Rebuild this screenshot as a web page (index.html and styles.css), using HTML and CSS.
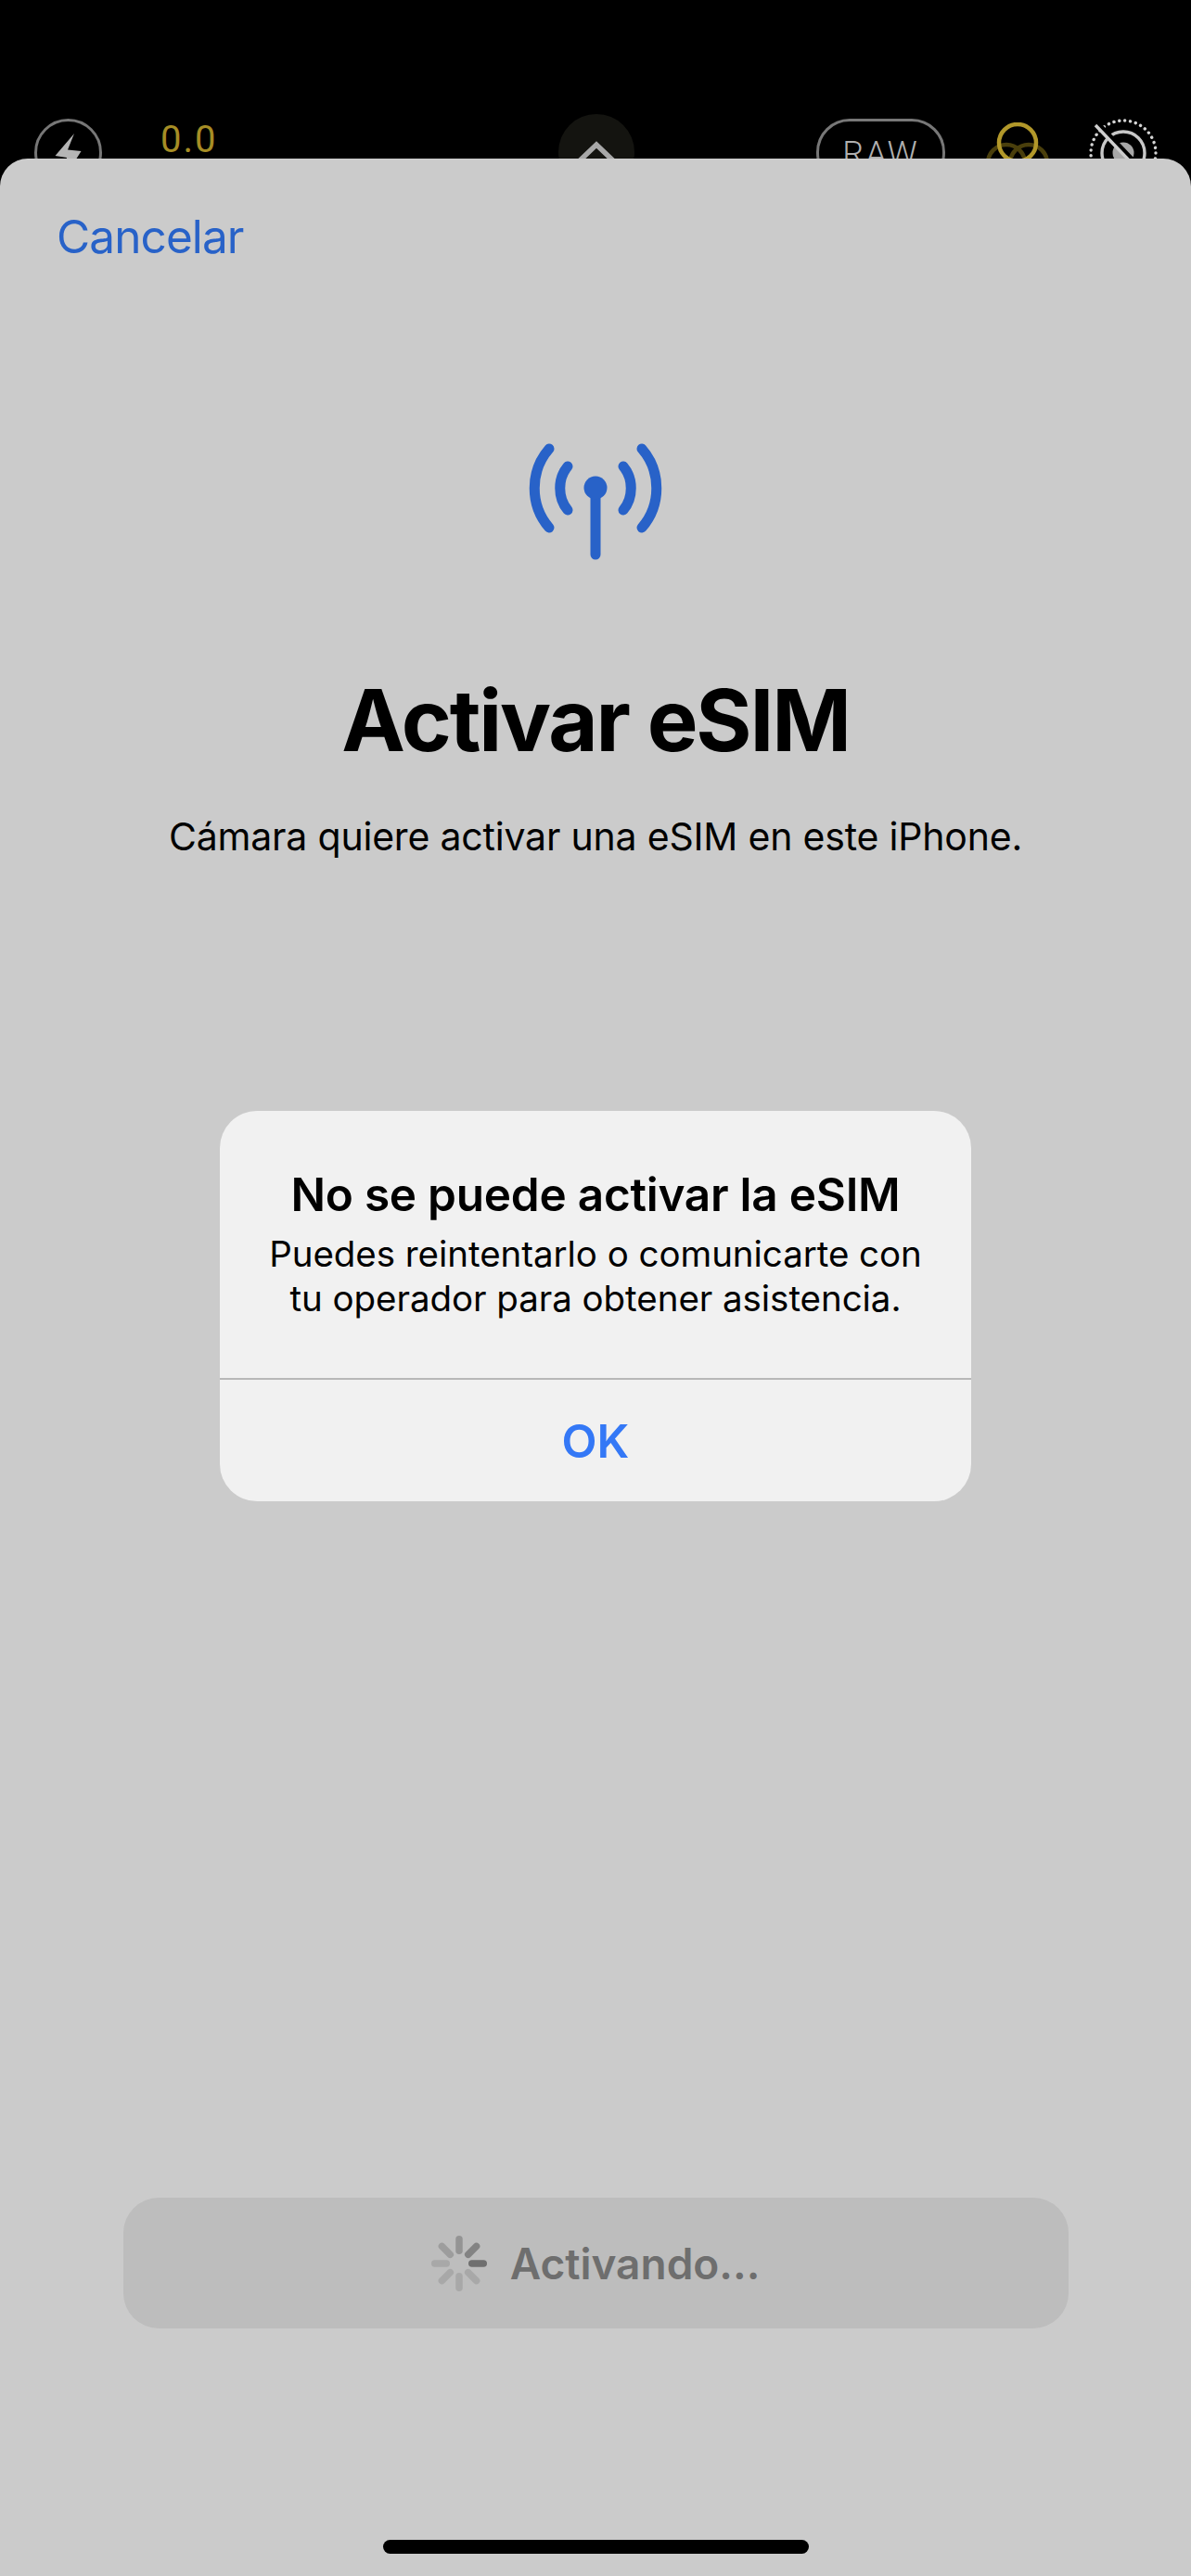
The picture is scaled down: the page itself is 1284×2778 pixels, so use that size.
FILE: index.html
```html
<!DOCTYPE html>
<html lang="es">
<head>
  <meta charset="UTF-8">
  <meta name="viewport" content="width=device-width, initial-scale=1.0">
  <title>Activar eSIM</title>
  <link rel="stylesheet" href="styles.css">
</head>
<body>

  <!-- camera controls, mostly covered by the sheet -->
  <div class="camera-bar">
    <div class="camera-left">
      <div class="flash-btn">
        <svg class="flash-icon" width="30" height="48" viewBox="0 0 30 48">
          <path d="M21 1 L0.5 25 L13 27 L9 46 L23.5 28 L28.5 20 L14 18.6 Z" fill="#b5b5b5"/>
        </svg>
      </div>
      <span class="exposure">0.0</span>
    </div>
    <div class="chevron-btn">
      <svg width="60" height="40" viewBox="0 0 60 40">
        <path d="M6 36 L30 13 L54 36" fill="none" stroke="#a8a8a8" stroke-width="5.5"/>
      </svg>
    </div>
    <div class="camera-right">
      <div class="raw-btn">RAW</div>
      <svg class="styles-icon" width="68" height="70" viewBox="0 0 68 70">
        <circle cx="22" cy="44" r="20" fill="none" stroke="#4a3f0c" stroke-width="4.5"/>
        <circle cx="46" cy="44" r="20" fill="none" stroke="#4a3f0c" stroke-width="4.5"/>
        <circle cx="34" cy="22" r="20" fill="none" stroke="#b2982a" stroke-width="4.5"/>
      </svg>
      <svg class="live-icon" width="74" height="74" viewBox="0 0 74 74">
        <circle cx="37" cy="37" r="35" fill="none" stroke="#d4d4d4" stroke-width="3.4" stroke-linecap="round" stroke-dasharray="0.1 5.84"/>
        <circle cx="37" cy="37" r="23" fill="none" stroke="#c8c8c8" stroke-width="3.4"/>
        <circle cx="37" cy="37" r="11.5" fill="#a8a8a8"/>
        <path d="M10 7 L50 49" stroke="#000" stroke-width="7"/>
        <path d="M7 7 L47 49" stroke="#cfcfcf" stroke-width="3.5"/>
      </svg>
    </div>
  </div>

  <div class="sheet">
    <a class="cancel-link">Cancelar</a>

    <svg class="antenna-icon" width="144" height="128" viewBox="0 0 144 128">
      <g fill="none" stroke="#2862c8" stroke-width="11" stroke-linecap="round">
        <path d="M22 7 C1 31 1 68 22 92"/>
        <path d="M122 7 C143 31 143 68 122 92"/>
        <path d="M42 26 C31 39 31 60 42 73"/>
        <path d="M102 26 C113 39 113 60 102 73"/>
        <path d="M72 49 L72 121"/>
      </g>
      <circle cx="72" cy="49" r="12.5" fill="#2862c8"/>
    </svg>

    <h1 class="sheet-title">Activar eSIM</h1>
    <p class="sheet-text">Cámara quiere activar una eSIM en este iPhone.</p>

    <div class="activate-btn">
      <svg class="spinner" width="60" height="60" viewBox="0 0 60 60">
        <g stroke-width="7.5" stroke-linecap="round">
          <path d="M43.75 30 H56.25" stroke="#6f6f6f"/>
          <path d="M48.6 11.4 L39.7 20.3" stroke="#838383"/>
          <path d="M30 3.75 V16.25" stroke="#949494"/>
          <path d="M11.4 11.4 L20.3 20.3" stroke="#9d9d9d"/>
          <path d="M3.75 30 H16.25" stroke="#a8a8a8"/>
          <path d="M11.4 48.6 L20.3 39.7" stroke="#a8a8a8"/>
          <path d="M30 43.75 V56.25" stroke="#a8a8a8"/>
          <path d="M48.6 48.6 L39.7 39.7" stroke="#a8a8a8"/>
        </g>
      </svg>
      <span>Activando...</span>
    </div>

    <div class="home-bar"></div>

    <div class="alert">
      <div class="alert-body">
        <h2 class="alert-title">No se puede activar la eSIM</h2>
        <p class="alert-text">Puedes reintentarlo o comunicarte con<br>tu operador para obtener asistencia.</p>
      </div>
      <div class="alert-action">OK</div>
    </div>
  </div>

</body>
</html>
```

FILE: styles.css
```css
* {
  box-sizing: border-box;
}

html,
body {
  margin: 0;
  height: 100%;
}

body {
  font-family: Inter, "Noto Sans", sans-serif;
  background-color: #000;
  display: flex;
  flex-direction: column;
  overflow: hidden;
}

.camera-bar {
  height: 171px;
  flex: none;
  overflow: hidden;
  display: grid;
  grid-template-columns: 1fr 82px 1fr;
  padding: 123px 36px 0 37px;
}

.camera-left {
  display: flex;
  align-items: flex-start;
  gap: 63px;
  padding-top: 5px;
}

.camera-right {
  display: flex;
  align-items: flex-start;
  justify-content: flex-end;
  padding-top: 5px;
}

.flash-btn {
  width: 73px;
  height: 73px;
  flex: none;
  border: 3px solid #777;
  border-radius: 50%;
  display: flex;
  justify-content: center;
  padding-top: 12px;
}

.exposure {
  margin-top: 3px;
  font-family: Roboto, sans-serif;
  font-size: 40px;
  line-height: 40px;
  letter-spacing: 2px;
  color: #a68d25;
}

.chevron-btn {
  width: 82px;
  height: 82px;
  border-radius: 50%;
  background-color: #141410;
  display: flex;
  justify-content: center;
  padding-top: 20px;
}

.raw-btn {
  width: 139px;
  height: 73px;
  flex: none;
  border: 3px solid #777;
  border-radius: 36px;
  margin-right: 44px;
  padding-top: 12px;
  text-align: center;
  font-family: Roboto, sans-serif;
  font-weight: 300;
  font-size: 36px;
  line-height: 47px;
  letter-spacing: 2px;
  color: #b0b0b0;
}

.styles-icon {
  flex: none;
  margin-top: 4px;
  margin-right: 43px;
}

.live-icon {
  flex: none;
}

.sheet {
  flex: 1;
  position: relative;
  background-color: #cbcbcb;
  border-radius: 30px 30px 0 0;
  display: flex;
  flex-direction: column;
  align-items: center;
}

.cancel-link {
  align-self: flex-start;
  margin: 53px 0 0 61px;
  font-size: 49.5px;
  line-height: 62px;
  letter-spacing: -0.9px;
  color: #2862c8;
}

.antenna-icon {
  margin-top: 191px;
}

.sheet-title {
  margin: 112px 0 0;
  font-size: 92px;
  line-height: 120px;
  font-weight: 700;
  letter-spacing: -2.1px;
  color: #000;
}

.sheet-text {
  margin: 39px 0 0;
  font-size: 41px;
  line-height: 52px;
  letter-spacing: -0.2px;
  color: #000;
}

.activate-btn {
  margin-top: auto;
  width: 1019px;
  height: 141px;
  border-radius: 38px;
  background-color: #bdbdbd;
  display: flex;
  justify-content: center;
  align-items: center;
  gap: 25px;
  font-size: 46px;
  font-weight: 600;
  color: #6e6e6e;
}

.home-bar {
  width: 459px;
  height: 15px;
  margin: 228px 0 24px;
  border-radius: 8px;
  background-color: #000;
}

.alert {
  position: absolute;
  top: 1027px;
  left: 237px;
  width: 810px;
  height: 421px;
  border-radius: 40px;
  background-color: #f1f1f1;
  display: flex;
  flex-direction: column;
}

.alert-body {
  flex: 1;
  padding-top: 59px;
  text-align: center;
}

.alert-title {
  margin: 0;
  font-size: 49.5px;
  line-height: 62px;
  font-weight: 600;
  letter-spacing: -0.25px;
  color: #000;
}

.alert-text {
  margin: 9px 0 0;
  font-size: 38.5px;
  line-height: 48px;
  letter-spacing: -0.05px;
  color: #000;
}

.alert-action {
  height: 133px;
  border-top: 2px solid #b8b8b8;
  display: flex;
  justify-content: center;
  align-items: center;
  font-size: 49.5px;
  font-weight: 600;
  color: #3478f6;
}
```
